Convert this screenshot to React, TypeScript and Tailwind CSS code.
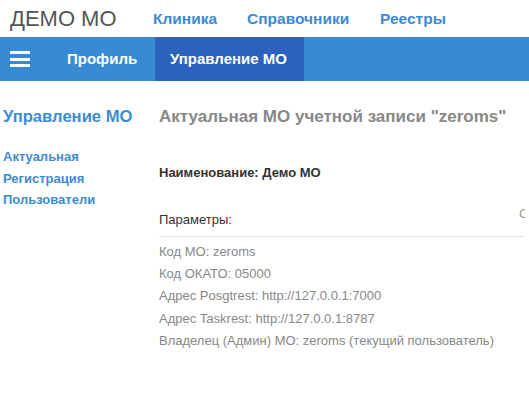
const params = [
  'Код МО: zeroms',
  'Код ОКАТО: 05000',
  'Адрес Posgtrest: http://127.0.0.1:7000',
  'Адрес Taskrest: http://127.0.0.1:8787',
  'Владелец (Админ) МО: zeroms (текущий пользователь)',
];

export default function App() {
  return (
    <div className="w-[529px] h-[407px] overflow-hidden bg-white font-['Liberation_Sans',Arial,sans-serif]">
      {/* Top bar */}
      <div className="flex items-center h-[37px]">
        <div className="pl-[10px] w-[153px] text-[22px] text-[#555] leading-none">ДЕМО МО</div>
        <div className="flex text-[15.5px] font-bold text-[#3b8bd5]">
          <span className="w-[94px]">Клиника</span>
          <span className="w-[133px]">Справочники</span>
          <span>Реестры</span>
        </div>
      </div>

      {/* Blue nav */}
      <div className="flex items-stretch h-[44px] bg-[#388ad5]">
        <div className="w-[52px] flex items-center pl-[10px]">
          <div className="flex flex-col gap-[3.5px]">
            <span className="block w-[20px] h-[3px] bg-white" />
            <span className="block w-[20px] h-[3px] bg-white" />
            <span className="block w-[20px] h-[3px] bg-white" />
          </div>
        </div>
        <div className="flex items-center pl-[15px] w-[103px] text-[15px] font-bold text-white">Профиль</div>
        <div className="flex items-center px-[15px] w-[149px] bg-[#2c61bd] text-[15px] font-bold text-white">Управление МО</div>
      </div>

      <div className="flex">
        {/* Sidebar */}
        <div className="w-[159px] pl-[3px] pt-[26px]">
          <div className="text-[16.6px] font-bold text-[#3b8bd5] leading-[20px]">Управление МО</div>
          <div className="mt-[19px] flex flex-col text-[13px] font-bold text-[#3b8bd5] leading-[21.5px]">
            <span>Актуальная</span>
            <span>Регистрация</span>
            <span>Пользователи</span>
          </div>
        </div>

        {/* Main */}
        <div className="flex-1 pt-[26px]">
          <div className="text-[17px] font-bold text-[#888] leading-[20px]">Актуальная МО учетной записи "zeroms"</div>
          <div className="mt-[36px] text-[13px] font-bold text-[#333] leading-[20px]">Наименование: Демо МО</div>
          <div className="mt-[26px] flex justify-between w-[365px] text-[13px] text-[#333] leading-[20px] pb-[6px] border-b border-[#e2e2e2]">
            <span className="pt-[1px]">Параметры:</span>
            <span className="-mt-[5px] -mr-[1px] text-[#999] w-[6px] overflow-hidden">С</span>
          </div>
          <div className="mt-[4px] flex flex-col text-[13px] text-[#888] leading-[22.2px]">
            {params.map((p) => (
              <span key={p}>{p}</span>
            ))}
          </div>
        </div>
      </div>
    </div>
  );
}
